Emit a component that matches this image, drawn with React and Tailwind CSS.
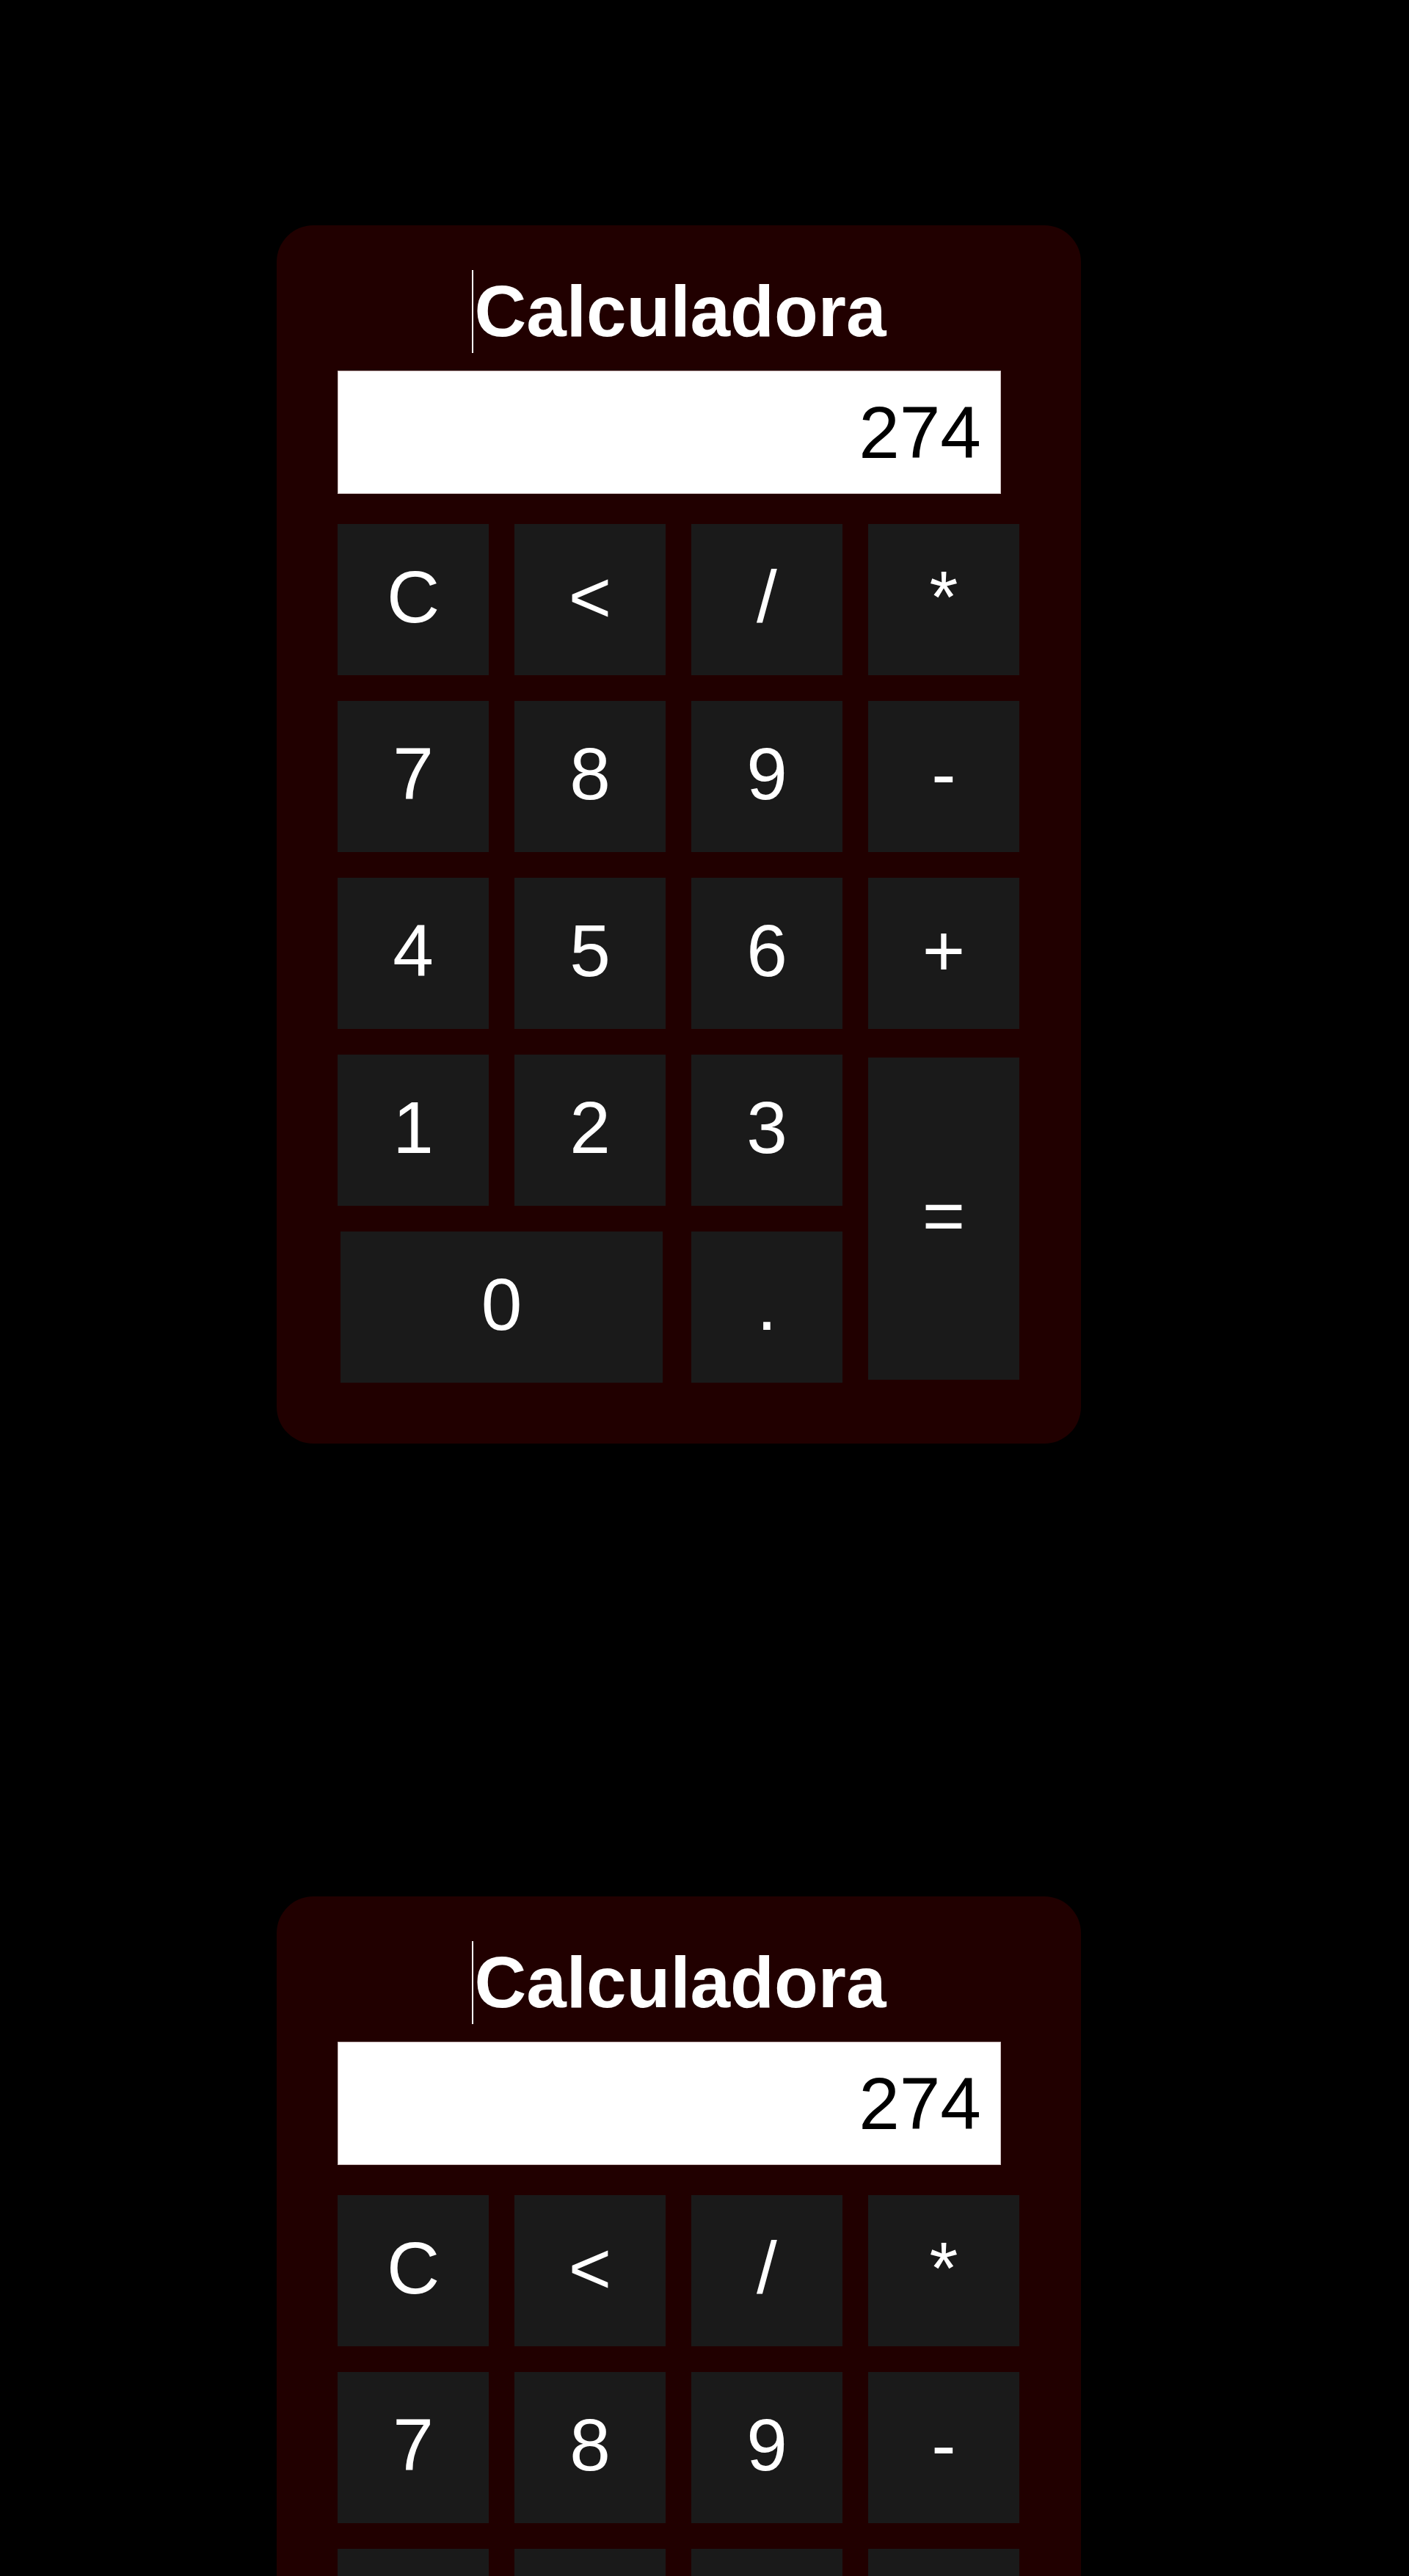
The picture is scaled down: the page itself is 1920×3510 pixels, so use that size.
import React from 'react';

const keys = [
  { label: 'C' },
  { label: '<' },
  { label: '/' },
  { label: '*' },
  { label: '7' },
  { label: '8' },
  { label: '9' },
  { label: '-' },
  { label: '4' },
  { label: '5' },
  { label: '6' },
  { label: '+' },
  { label: '1' },
  { label: '2' },
  { label: '3' },
  { label: '=', className: 'row-span-2 my-[4px]' },
  { label: '0', className: 'col-span-2 mx-[4px]' },
  { label: '.' },
];

const Calculator = () => {
  return (
    <div className="w-[1096px] rounded-[50px] bg-[#210000] pt-[61px] px-[83px] pb-[83px] font-['Liberation_Sans',Arial,sans-serif]">
      <h1 className="flex justify-center text-[98px] leading-[113px] font-bold text-white">
        <span className="inline-block w-[2px] h-[113px] bg-white mr-[2px]"></span>
        Calculadora
      </h1>
      <input
        readOnly
        value="274"
        className="mt-[24px] block w-[904px] h-[168px] bg-white border border-[#c9b9b9] pr-[26px] text-right text-[100px] text-black outline-none font-['Liberation_Sans',Arial,sans-serif]"
      />
      <div className="mt-[41px] grid grid-cols-[repeat(4,206px)] auto-rows-[206px] gap-[35px]">
        {keys.map((k) => (
          <button
            key={k.label}
            className={`flex items-center justify-center pb-[9px] bg-[#1a1a1a] text-white text-[100px] leading-none ${k.className || ''}`}
          >
            {k.label}
          </button>
        ))}
      </div>
    </div>
  );
};

const App = () => {
  return (
    <div className="min-h-screen bg-black pt-[307px] pl-[377px] pb-[300px] flex flex-col gap-[617px]">
      <Calculator />
      <Calculator />
    </div>
  );
};

export default App;
